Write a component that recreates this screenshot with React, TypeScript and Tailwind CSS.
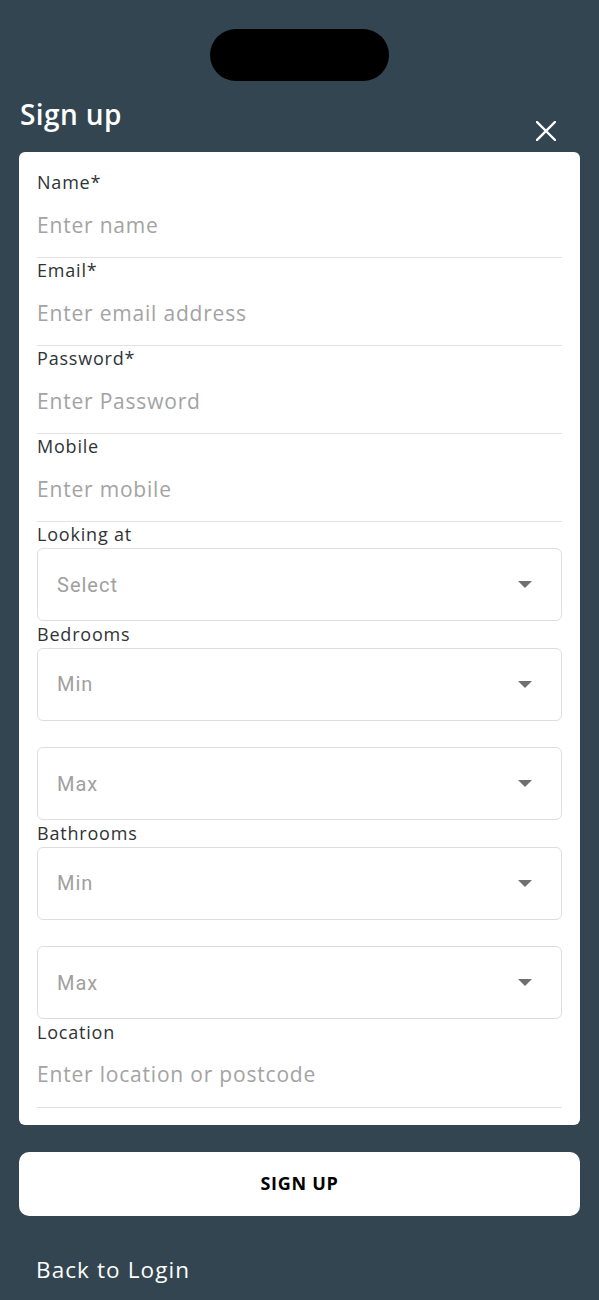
import React from "react";

const body = { fontFamily: '"Open Sans", "Noto Sans", sans-serif' };
const roboto = { fontFamily: 'Roboto, "Noto Sans", sans-serif' };

function TextField({ label, placeholder }: { label: string; placeholder: string }) {
  return (
    <div className="flex flex-col border-b border-[#e2e2e2]">
      <div className="h-6 leading-6 text-[18px] tracking-[0.8px] text-[#2f3336]" style={body}>
        {label}
      </div>
      <div className="h-[63px] flex items-center text-[21px] tracking-[0.8px] text-[#a3a3a3]" style={body}>
        {placeholder}
      </div>
    </div>
  );
}

function SelectField({ label, value }: { label: string; value: string }) {
  return (
    <div className="flex flex-col mb-[0.5px]">
      <div className="h-6 leading-6 text-[18px] tracking-[0.8px] text-[#2f3336]" style={body}>
        {label}
      </div>
      <div className="mt-[2px] h-[73px] rounded-[6px] border border-[#dedede] flex items-center justify-between pl-[19px] pr-[29px]">
        <span className="text-[20px] tracking-[1px] text-[#a0a0a0]" style={roboto}>
          {value}
        </span>
        <svg width="14" height="7" viewBox="0 0 14 7">
          <path d="M0 0 H14 L7 7 Z" fill="#6f6f6f" />
        </svg>
      </div>
    </div>
  );
}

export default function App() {
  return (
    <div className="min-h-[1300px] w-full bg-[#324550] flex flex-col pt-[29px]">
      <div className="self-center w-[179px] h-[52px] rounded-full bg-black" />
      <div className="mt-[16px] h-[55px] flex justify-between pl-[20px] pr-[43px]">
        <div className="self-start text-[28px] leading-[34px] font-semibold tracking-[0.4px] text-white" style={body}>
          Sign up
        </div>
        <svg className="self-end mb-[11px]" width="20" height="20" viewBox="0 0 20 20">
          <path d="M1 1 L19 19 M19 1 L1 19" stroke="white" strokeWidth="2.4" strokeLinecap="square" />
        </svg>
      </div>
      <div className="mx-[19px] rounded-[6px] bg-white px-[18px] pt-[18px] pb-[17px] flex flex-col">
        <TextField label="Name*" placeholder="Enter name" />
        <TextField label="Email*" placeholder="Enter email address" />
        <TextField label="Password*" placeholder="Enter Password" />
        <TextField label="Mobile" placeholder="Enter mobile" />
        <SelectField label="Looking at" value="Select" />
        <SelectField label="Bedrooms" value="Min" />
        <SelectField label="" value="Max" />
        <SelectField label="Bathrooms" value="Min" />
        <SelectField label="" value="Max" />
        <TextField label="Location" placeholder="Enter location or postcode" />
      </div>
      <button
        className="mt-[27px] mx-[19px] h-[64px] rounded-[10px] bg-white flex items-center justify-center text-[18px] font-bold tracking-[0.7px] text-black"
        style={body}
      >
        SIGN UP
      </button>
      <div className="mt-[39px] ml-[36px] text-[22.5px] leading-[30px] tracking-[1.1px] text-white" style={body}>
        Back to Login
      </div>
    </div>
  );
}
